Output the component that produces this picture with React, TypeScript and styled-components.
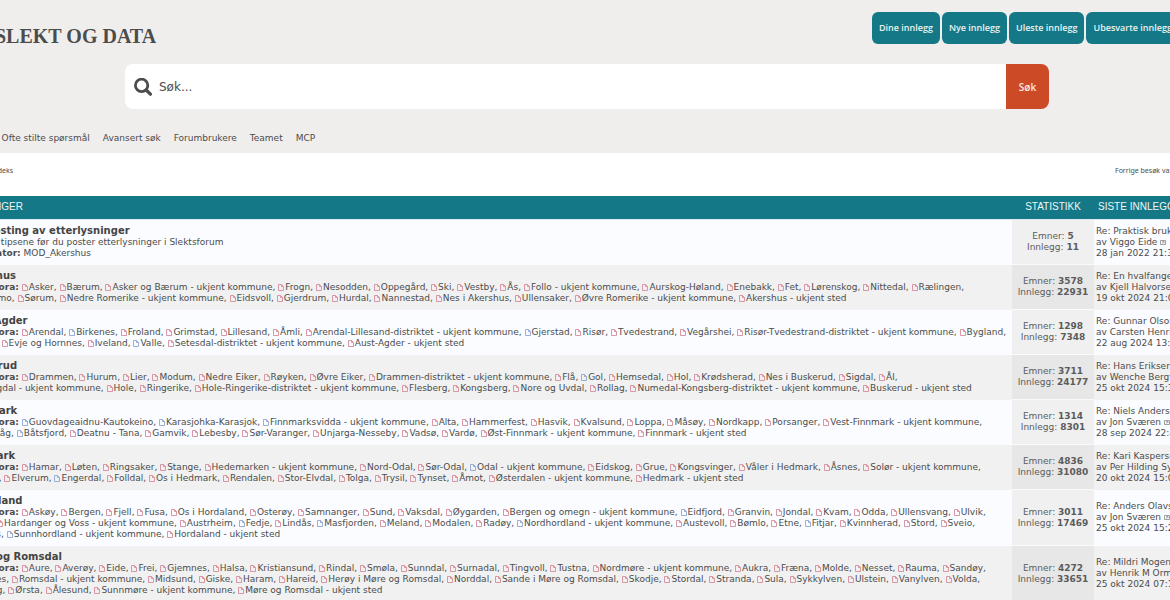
import React from "react";
import styled, { createGlobalStyle } from "styled-components";

const sans = `"DejaVu Sans", Verdana, sans-serif`;
const teal = "#157887";

const GlobalStyle = createGlobalStyle`
  * { box-sizing: border-box; }
  body {
    margin: 0;
    background: #fff;
    color: #4c4c4c;
    font: 9px/11px ${sans};
  }
  a { color: inherit; text-decoration: none; }
  a:hover { text-decoration: underline; }
`;

const Viewport = styled.div`
  overflow: hidden;
`;

const Wide = styled.div`
  margin: 0 -160px 0 -36px;
`;

const Header = styled.header`
  background: #f0eeed;
  padding: 12px 0 9px;
  margin-left: -4px;
`;

const TopBar = styled.div`
  display: flex;
  justify-content: space-between;
  padding-right: 77px;
`;

const Logo = styled.a`
  display: flex;
  align-items: center;
  gap: 7px;
  padding-top: 16px;
  height: 32px;
  font: bold 20px/32px "Liberation Serif", "Times New Roman", serif;
  color: #4c4c4c;
`;

const Actions = styled.nav`
  display: flex;
  gap: 2px;
`;

const ActionButton = styled.button`
  height: 32px;
  padding: 0 7px;
  border: 0;
  border-radius: 6px;
  background: ${teal};
  color: #e9f2f2;
  font: 600 9px/12px "Open Sans", sans-serif;
  white-space: nowrap;
`;

const SearchForm = styled.form`
  display: flex;
  height: 45px;
  margin: 20px 281px 0 165px;
`;

const SearchField = styled.label`
  flex: 1;
  display: flex;
  align-items: center;
  gap: 7px;
  padding-left: 9px;
  background: #fff;
  border-radius: 8px 0 0 8px;
`;

const SearchInput = styled.input`
  flex: 1;
  border: 0;
  padding: 0;
  outline: 0;
  background: transparent;
  color: #4c4c4c;
  font: 12px/20px ${sans};
  &::placeholder { color: #4c4c4c; opacity: 1; }
`;

const SearchButton = styled.button`
  width: 43px;
  border: 0;
  border-radius: 0 8px 8px 0;
  background: #cd4a27;
  color: #fbe9e4;
  font: 600 10px/14px "Open Sans", sans-serif;
`;

const NavBar = styled.nav`
  display: flex;
  gap: 13px;
  padding-top: 20px;
  line-height: 18px;
  height: 35px;
  white-space: nowrap;
`;

const Crumbs = styled.div`
  display: flex;
  justify-content: space-between;
  margin-left: -4px;
  padding: 12px 98px 0 0;
  height: 43px;
  font-family: "Noto Sans", sans-serif;
  font-size: 7px;
`;

const Crumb = styled.a`
  display: flex;
  gap: 3px;
  height: 11px;
`;

const ForumTable = styled.table`
  width: 100%;
  table-layout: fixed;
  border-collapse: collapse;
`;

const HeadCell = styled.th<{ $width?: number; $center?: boolean }>`
  ${(p) => p.$width && `width: ${p.$width}px;`}
  height: 23px;
  padding: 0 4px 0 ${(p) => (p.$width ? 4 : 0)}px;
  background: ${teal};
  border-bottom: 1px solid #dcebed;
  color: #eef6f6;
  text-align: ${(p) => (p.$center ? "center" : "left")};
  font: 500 10px/22px "Liberation Sans", Arial, sans-serif;
  white-space: nowrap;
`;

const Row = styled.tr`
  background: #fafcff;
  &:nth-child(even) { background: #f1f1f1; }
`;

const ForumCell = styled.td`
  padding: 5px 2px 6px 0;
  vertical-align: top;
`;

const Title = styled.h3`
  margin: 0;
  font-size: 10px;
  line-height: 12px;
  color: #444;
`;

const Text = styled.p`
  margin: 0;
`;

const SubLink = styled.a`
  white-space: nowrap;
`;

const DocSvg = styled.svg<{ $read: boolean }>`
  margin-right: 1px;
  vertical-align: -1px;
  stroke: ${(p) => (p.$read ? "#8fa6d4" : "#d68b9b")};
`;

const StatCell = styled.td`
  padding: 0;
  background: #f0f0f0;
  border-bottom: 1px solid #fafafa;
  color: #5c5c5c;
  text-align: center;
  ${Row}:nth-child(even) & { background: #e7e7e7; }
`;

const LastCell = styled.td`
  padding: 0 0 0 2px;
  white-space: nowrap;
`;

const Doc = ({ read }: { read: boolean }) => (
  <DocSvg $read={read} width="6" height="7" viewBox="0 0 6 7" fill="none" aria-hidden="true">
    <path d="M.5.5h3l2 2v4h-5zM3.5.5v2h2" strokeWidth=".9" />
  </DocSvg>
);

const Jump = () => (
  <svg width="6" height="5" viewBox="0 0 6 5" fill="none" stroke="#888" aria-hidden="true">
    <path d="M.5.5h5v4h-5zM2 3.4l1.8-1.6M2.4 1.6H4v1.4" strokeWidth=".8" />
  </svg>
);

type Forum = {
  title: string;
  subs?: string;
  topics: number;
  posts: number;
  last: [string, string, string];
};

// Sub-forums are separated by commas; a leading "*" marks one without unread posts.
const forums: Forum[] = [
  { title: "Om posting av etterlysninger", topics: 5, posts: 11,
    last: ["Re: Praktisk bruk av forumet", "Viggo Eide", "28 jan 2022 21:33"] },
  { title: "Akershus", topics: 3578, posts: 22931,
    subs: "Asker,Bærum,Asker og Bærum - ukjent kommune,Frogn,Nesodden,Oppegård,Ski,Vestby,Ås,Follo - ukjent kommune,Aurskog-Høland,Enebakk,Fet,Lørenskog,Nittedal,Rælingen,Skedsmo,Sørum,Nedre Romerike - ukjent kommune,Eidsvoll,Gjerdrum,Hurdal,Nannestad,Nes i Akershus,Ullensaker,Øvre Romerike - ukjent kommune,Akershus - ukjent sted",
    last: ["Re: En hvalfanger fra Asker", "Kjell Halvorsen", "19 okt 2024 21:05"] },
  { title: "Aust-Agder", topics: 1298, posts: 7348,
    subs: "Arendal,*Birkenes,Froland,Grimstad,Lillesand,Åmli,Arendal-Lillesand-distriktet - ukjent kommune,*Gjerstad,Risør,Tvedestrand,Vegårshei,Risør-Tvedestrand-distriktet - ukjent kommune,Bygland,Bykle,Evje og Hornnes,Iveland,*Valle,Setesdal-distriktet - ukjent kommune,Aust-Agder - ukjent sted",
    last: ["Re: Gunnar Olson", "Carsten Henriksen", "22 aug 2024 13:31"] },
  { title: "Buskerud", topics: 3711, posts: 24177,
    subs: "Drammen,Hurum,Lier,Modum,Nedre Eiker,Røyken,Øvre Eiker,Drammen-distriktet - ukjent kommune,Flå,*Gol,Hemsedal,Hol,Krødsherad,Nes i Buskerud,Sigdal,Ål,Hallingdal - ukjent kommune,Hole,Ringerike,Hole-Ringerike-distriktet - ukjent kommune,Flesberg,Kongsberg,Nore og Uvdal,Rollag,Numedal-Kongsberg-distriktet - ukjent kommune,Buskerud - ukjent sted",
    last: ["Re: Hans Eriksen", "Wenche Bergfjord", "25 okt 2024 15:31"] },
  { title: "Finnmark", topics: 1314, posts: 8301,
    subs: "*Guovdageaidnu-Kautokeino,*Karasjohka-Karasjok,*Finnmarksvidda - ukjent kommune,Alta,Hammerfest,Hasvik,Kvalsund,Loppa,Måsøy,Nordkapp,Porsanger,Vest-Finnmark - ukjent kommune,Berlevåg,*Båtsfjord,Deatnu - Tana,Gamvik,Lebesby,Sør-Varanger,Unjarga-Nesseby,Vadsø,Vardø,Øst-Finnmark - ukjent kommune,Finnmark - ukjent sted",
    last: ["Re: Niels Andersen", "Jon Sværen", "28 sep 2024 22:41"] },
  { title: "Hedmark", topics: 4836, posts: 31080,
    subs: "Hamar,Løten,Ringsaker,Stange,Hedemarken - ukjent kommune,Nord-Odal,Sør-Odal,*Odal - ukjent kommune,Eidskog,Grue,Kongsvinger,Våler i Hedmark,Åsnes,Solør - ukjent kommune,Alvdal,Elverum,*Engerdal,Folldal,Os i Hedmark,Rendalen,Stor-Elvdal,Tolga,Trysil,Tynset,Åmot,Østerdalen - ukjent kommune,Hedmark - ukjent sted",
    last: ["Re: Kari Kaspersen", "Per Hilding Sylte", "20 okt 2024 15:01"] },
  { title: "Hordaland", topics: 3011, posts: 17469,
    subs: "Askøy,Bergen,Fjell,Fusa,Os i Hordaland,Osterøy,Samnanger,Sund,Vaksdal,Øygarden,Bergen og omegn - ukjent kommune,*Eidfjord,Granvin,Jondal,Kvam,Odda,Ullensvang,Ulvik,Voss,Hardanger og Voss - ukjent kommune,Austrheim,*Fedje,Lindås,*Masfjorden,Meland,Modalen,Radøy,*Nordhordland - ukjent kommune,Austevoll,Bømlo,Etne,*Fitjar,Kvinnherad,Stord,Sveio,Tysnes,*Sunnhordland - ukjent kommune,Hordaland - ukjent sted",
    last: ["Re: Anders Olavsen", "Jon Sværen", "25 okt 2024 15:21"] },
  { title: "Møre og Romsdal", topics: 4272, posts: 33651,
    subs: "Aure,Averøy,Eide,Frei,Gjemnes,Halsa,Kristiansund,Rindal,Smøla,Sunndal,Surnadal,Tingvoll,Tustna,Nordmøre - ukjent kommune,Aukra,Fræna,Molde,Nesset,Rauma,Sandøy,Vestnes,Romsdal - ukjent kommune,Midsund,Giske,Haram,Hareid,Herøy i Møre og Romsdal,Norddal,Sande i Møre og Romsdal,Skodje,Stordal,Stranda,Sula,Sykkylven,Ulstein,Vanylven,Volda,Ørskog,Ørsta,Ålesund,Sunnmøre - ukjent kommune,Møre og Romsdal - ukjent sted",
    last: ["Re: Mildri Mogensen", "Henrik M Ormåsen", "25 okt 2024 07:11"] },
];

const SubForums = ({ subs }: { subs: string }) => {
  const names = subs.split(",");
  return (
    <Text>
      <b>Underfora:</b>{" "}
      {names.map((n, i) => (
        <React.Fragment key={n}>
          <SubLink href="#">
            <Doc read={n.startsWith("*")} />
            {n.replace("*", "")}
            {i < names.length - 1 && ","}
          </SubLink>{" "}
        </React.Fragment>
      ))}
    </Text>
  );
};

export default function App() {
  return (
    <Viewport>
      <GlobalStyle />
      <Wide>
        <Header>
          <TopBar>
            <Logo href="#">
              <svg width="28" height="24" viewBox="0 0 28 24" fill={teal} aria-hidden="true">
                <circle cx="14" cy="12" r="10" />
              </svg>
              SLEKT OG DATA
            </Logo>
            <Actions>
              {["Dine innlegg", "Nye innlegg", "Uleste innlegg", "Ubesvarte innlegg", "Aktive emner"].map((t) => (
                <ActionButton key={t} type="button">{t}</ActionButton>
              ))}
            </Actions>
          </TopBar>
          <SearchForm>
            <SearchField>
              <svg width="18" height="18" viewBox="0 0 18 18" fill="none" stroke="#4c4c4c" aria-label="Søk">
                <circle cx="7.6" cy="7.4" r="6.2" strokeWidth="2.8" />
                <path d="M12.2 12l4.2 4.2" strokeWidth="3.2" strokeLinecap="round" />
              </svg>
              <SearchInput type="text" placeholder="Søk..." />
            </SearchField>
            <SearchButton type="button">Søk</SearchButton>
          </SearchForm>
          <NavBar>
            {["Forum", "Ofte stilte spørsmål", "Avansert søk", "Forumbrukere", "Teamet", "MCP"].map((t) => (
              <a key={t} href="#">{t}</a>
            ))}
          </NavBar>
        </Header>
        <Crumbs>
          <Crumb href="#">
            <svg width="7" height="8" viewBox="0 0 8 8" fill="#4c4c4c" aria-hidden="true">
              <path d="M0 4l4-4 4 4H7v4H1V4z" />
            </svg>
            Forumindeks
          </Crumb>
          <span>Forrige besøk var 25 okt 2024 14:52</span>
        </Crumbs>
        <ForumTable>
          <thead>
            <tr>
              <HeadCell>SAMLINGER</HeadCell>
              <HeadCell $width={82} $center>STATISTIKK</HeadCell>
              <HeadCell $width={236}>SISTE INNLEGG</HeadCell>
            </tr>
          </thead>
          <tbody>
            {forums.map((f) => (
              <Row key={f.title}>
                <ForumCell>
                  <Title><a href="#">{f.title}</a></Title>
                  {f.subs ? (
                    <SubForums subs={f.subs} />
                  ) : (
                    <>
                      <Text>Les alle tipsene før du poster etterlysninger i Slektsforum</Text>
                      <Text><b>Moderator:</b> <a href="#">MOD_Akershus</a></Text>
                    </>
                  )}
                </ForumCell>
                <StatCell>
                  <Text>Emner: <b>{f.topics}</b></Text>
                  <Text>Innlegg: <b>{f.posts}</b></Text>
                </StatCell>
                <LastCell>
                  <Text><a href="#">{f.last[0]}</a></Text>
                  <Text>av <a href="#">{f.last[1]}</a> <Jump /></Text>
                  <Text>{f.last[2]}</Text>
                </LastCell>
              </Row>
            ))}
          </tbody>
        </ForumTable>
      </Wide>
    </Viewport>
  );
}
